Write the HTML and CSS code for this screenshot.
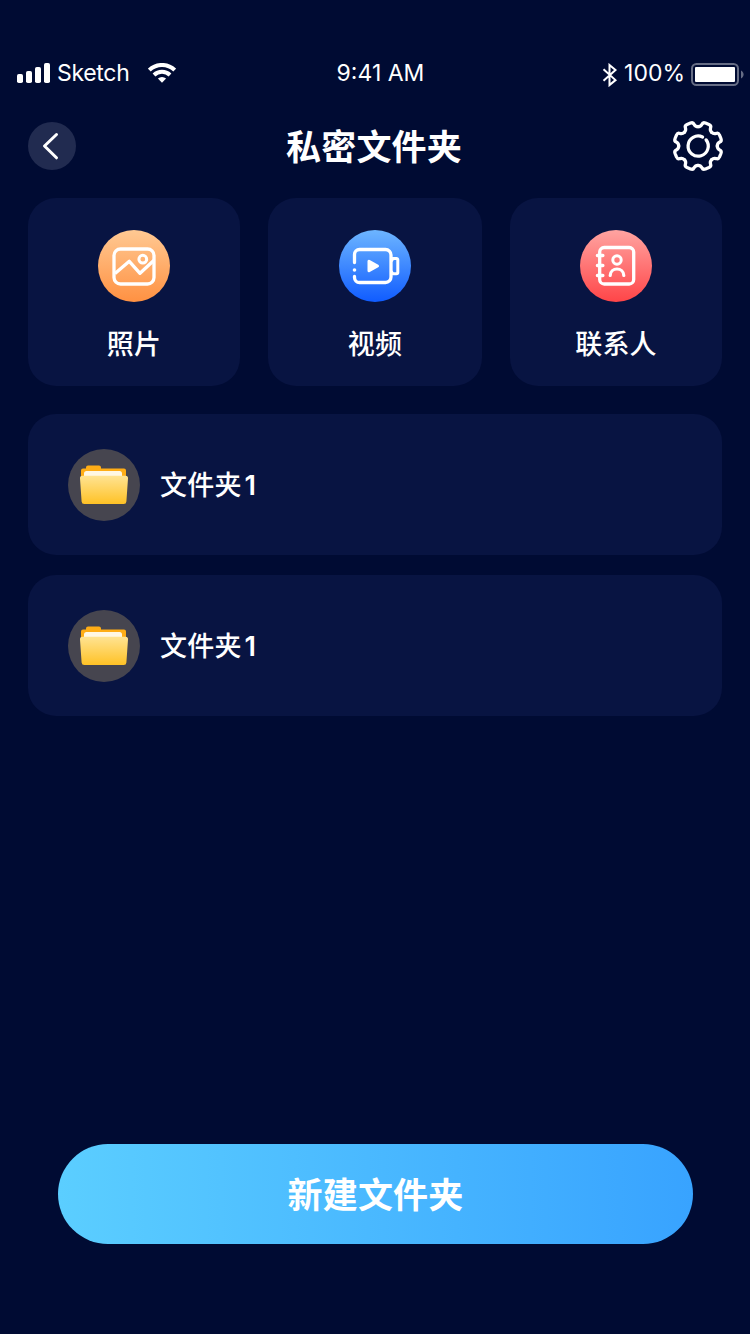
FILE: index.html
```html
<!DOCTYPE html>
<html lang="zh-CN">

<head>
    <meta charset="UTF-8">
    <meta name="viewport" content="width=device-width, initial-scale=1.0">
    <title>私密文件夹</title>
    <link rel="stylesheet" href="styles.css">
</head>

<body>
    <div class="page">
        <div class="status-bar">
            <div class="status-left">
                <svg width="34" height="20" viewBox="0 0 34 20" fill="#fff">
                    <rect x="0" y="11" width="6" height="9" rx="1.8" />
                    <rect x="9" y="8" width="6" height="12" rx="1.8" />
                    <rect x="18" y="4" width="6" height="16" rx="1.8" />
                    <rect x="27" y="0" width="6" height="20" rx="1.8" />
                </svg>
                <span class="carrier">Sketch</span>
                <svg class="wifi" width="28" height="20" viewBox="0 0 28 20" fill="none" stroke="#fff" stroke-width="4">
                    <path d="M1.300 7.100a18.200 18.200 0 0 1 25.400 0" />
                    <path d="M6 12a11.600 11.600 0 0 1 16 0" />
                    <path d="M14 19.800l-4.100-4.300a6 6 0 0 1 8.200 0z" fill="#fff" stroke="none" />
                </svg>
            </div>
            <span class="time">9:41 AM</span>
            <div class="status-right">
                <svg width="16" height="24" viewBox="0 0 16 24" fill="none" stroke="#fff" stroke-width="2">
                    <path d="M1.500 6.300l12 10.800-6 5V2l6 5-12 10.800" />
                </svg>
                <span class="percent">100%</span>
                <svg width="53" height="24" viewBox="0 0 53 24">
                    <rect x="1" y="1" width="46" height="21" rx="4.500" fill="none" stroke="#666d85" stroke-width="2" />
                    <rect x="4" y="4" width="40" height="15" rx="1" fill="#fff" />
                    <path d="M50 7.500c3.400 1.400 3.400 6.600 0 8z" fill="#666d85" />
                </svg>
            </div>
        </div>

        <header>
            <button class="back">
                <svg width="48" height="48" viewBox="0 0 48 48" fill="none" stroke="#fff" stroke-width="3" stroke-linecap="round" stroke-linejoin="round">
                    <path d="M28.500 12.500L16.500 24l12 11.800" />
                </svg>
            </button>
            <h1>私密文件夹</h1>
            <button class="settings">
                <svg width="52" height="52" viewBox="-26.300 -26.300 52.600 52.600" fill="none" stroke="#fff" stroke-width="3.300" stroke-linecap="round">
                    <defs>
                        <path id="tooth" d="M0-19.500C2-19.500 3-20 4-22C4.600-23.400 6-23.800 7.600-23.200L11.030-21.780C12.590-21.070 13.290-19.800 12.730-18.380C12.020-16.260 12.370-15.200 13.790-13.790" />
                    </defs>
                    <use href="#tooth" />
                    <use href="#tooth" transform="rotate(45)" />
                    <use href="#tooth" transform="rotate(90)" />
                    <use href="#tooth" transform="rotate(135)" />
                    <use href="#tooth" transform="rotate(180)" />
                    <use href="#tooth" transform="rotate(225)" />
                    <use href="#tooth" transform="rotate(270)" />
                    <use href="#tooth" transform="rotate(315)" />
                    <path d="M8.200-6.200A10.200 10.200 0 1 1 4.600-9.100" />
                </svg>
            </button>
        </header>

        <div class="categories">
            <div class="category">
                <div class="icon icon-photo">
                    <svg width="72" height="72" viewBox="0 0 72 72" fill="none" stroke="#fff" stroke-width="3.300" stroke-linejoin="round">
                        <rect x="16" y="19" width="40" height="35" rx="6.500" />
                        <circle cx="44.800" cy="29.200" r="3.900" stroke-width="3" />
                        <path d="M17 43.500L31.300 31.300 42 43.300 56 30.300" />
                    </svg>
                </div>
                <span>照片</span>
            </div>
            <div class="category">
                <div class="icon icon-video">
                    <svg width="72" height="72" viewBox="0 0 72 72" fill="none" stroke="#fff" stroke-width="3.300" stroke-linecap="round">
                        <path d="M15.500 32.500V24.500a5 5 0 0 1 5-5H46.500a5.500 5.500 0 0 1 5.500 5.500V47a5.500 5.500 0 0 1-5.500 5.500H20.500a5 5 0 0 1-5-5V46.500" />
                        <path d="M52.500 30.500l1.500-2h3.500a1.300 1.300 0 0 1 1.300 1.300V42.500a1.300 1.300 0 0 1-1.300 1.300H54l-1.500-2" stroke-width="3" />
                        <circle cx="15.500" cy="40" r="1.800" fill="#fff" stroke="none" />
                        <path d="M30 31.300v9.400l8.500-4.700z" fill="#fff" stroke-width="3" stroke-linejoin="round" />
                    </svg>
                </div>
                <span>视频</span>
            </div>
            <div class="category">
                <div class="icon icon-contact">
                    <svg width="72" height="72" viewBox="0 0 72 72" fill="none" stroke="#fff" stroke-width="3.300" stroke-linecap="round">
                        <rect x="19.700" y="17.500" width="34" height="36.500" rx="4.500" />
                        <path d="M17.400 25.500h5.500M17.400 35.500h5.500M17.400 45.500h5.500" />
                        <circle cx="37" cy="30" r="4.200" stroke-width="3" />
                        <path d="M30.200 45.500c.3-8.700 13.300-8.700 13.600 0" stroke-width="3.200" />
                    </svg>
                </div>
                <span>联系人</span>
            </div>
        </div>

        <svg class="defs" width="0" height="0">
            <defs>
                <linearGradient id="front" x1="0" y1="0" x2="0" y2="1">
                    <stop offset="0" stop-color="#ffe392" />
                    <stop offset="1" stop-color="#ffc226" />
                </linearGradient>
                <symbol id="folder" viewBox="0 0 72 72">
                    <path d="M13 21.500a2 2 0 0 1 2-2h3v-1a2 2 0 0 1 2-2h11a2 2 0 0 1 2 2v1h23a2 2 0 0 1 2 2V40H13z" fill="#ffad16" />
                    <path d="M16 24.500a2.500 2.500 0 0 1 2.500-2.500h33a2.500 2.500 0 0 1 2.500 2.500V40H16z" fill="#fff7e4" />
                    <path d="M12 29.500a2.500 2.500 0 0 1 2.500-2.700h43a2.500 2.500 0 0 1 2.500 2.700l-1.600 23a2.700 2.700 0 0 1-2.700 2.500H16.300a2.700 2.700 0 0 1-2.700-2.500z" fill="url(#front)" />
                </symbol>
            </defs>
        </svg>

        <div class="folder-list">
            <div class="folder-item">
                <div class="icon icon-folder"><svg width="72" height="72"><use href="#folder" /></svg></div>
                <span class="name">文件夹<b>1</b></span>
            </div>
            <div class="folder-item">
                <div class="icon icon-folder"><svg width="72" height="72"><use href="#folder" /></svg></div>
                <span class="name">文件夹<b>1</b></span>
            </div>
        </div>

        <button class="create-btn">新建文件夹</button>
    </div>
</body>

</html>
```
FILE: styles.css
```css
* {
    box-sizing: border-box;
}

body {
    margin: 0;
    background: #000b33;
    color: #fff;
    font-family: Inter, "Noto Sans CJK SC", sans-serif;
}

svg {
    display: block;
}

button {
    padding: 0;
    border: none;
    background: none;
    color: #fff;
    font-family: inherit;
    cursor: pointer;
}

.page {
    display: flex;
    flex-direction: column;
    width: 750px;
    height: 1334px;
    padding: 56px 28px 90px;
}

.status-bar {
    display: grid;
    grid-template-columns: 1fr auto 1fr;
    align-items: center;
    height: 34px;
    margin: 0 -22px 0 -11px;
    font-size: 23px;
    line-height: 34px;
}

.status-left,
.status-right {
    display: flex;
    align-items: center;
}

.status-left {
    gap: 6px;
}

.carrier {
    width: 72px;
    letter-spacing: -0.3px;
    white-space: nowrap;
}

.wifi {
    margin-left: 13px;
}

.status-right {
    justify-content: flex-end;
    gap: 6px;
}

.status-right svg {
    margin-top: 4px;
}

header {
    display: flex;
    justify-content: space-between;
    align-items: center;
    height: 52px;
    margin: 30px -2px 0 0;
}

h1 {
    margin: 0;
    padding-top: 2px;
    font-size: 35px;
    line-height: 52px;
    letter-spacing: 0.2px;
}

.back {
    width: 48px;
    height: 48px;
    border-radius: 50%;
    background: #212b50;
}

.categories {
    display: grid;
    grid-template-columns: 212px 214px 212px;
    gap: 28px;
    margin-top: 26px;
}

.category {
    display: flex;
    flex-direction: column;
    align-items: center;
    height: 188px;
    padding-top: 32px;
    border-radius: 28px;
    background: #081442;
}

.category span,
.name {
    font-size: 27px;
    font-weight: 500;
    line-height: 40px;
    letter-spacing: 0.2px;
}

.category span {
    margin-top: 23px;
}

.name {
    padding-top: 2px;
}

.name b {
    margin-left: 3px;
    font-weight: 600;
}

.icon {
    width: 72px;
    height: 72px;
    border-radius: 50%;
}

.icon-photo {
    background: linear-gradient(#ffc993, #ff9142);
}

.icon-video {
    background: linear-gradient(#6db5ff, #105cff);
}

.icon-contact {
    background: linear-gradient(#ffa4a1, #ff4548);
}

.icon-folder {
    background: #46454f;
}

.defs {
    position: absolute;
}

.folder-list {
    display: flex;
    flex-direction: column;
    gap: 20px;
    margin-top: 28px;
}

.folder-item {
    display: flex;
    align-items: center;
    gap: 20px;
    height: 141px;
    padding-left: 40px;
    border-radius: 28px;
    background: #081442;
}

.create-btn {
    height: 100px;
    margin: auto 29px 0 30px;
    padding-bottom: 3px;
    border-radius: 50px;
    background: linear-gradient(90deg, #5bceff, #38a3ff);
    font-size: 35px;
    font-weight: bold;
    letter-spacing: 0.2px;
}
```
